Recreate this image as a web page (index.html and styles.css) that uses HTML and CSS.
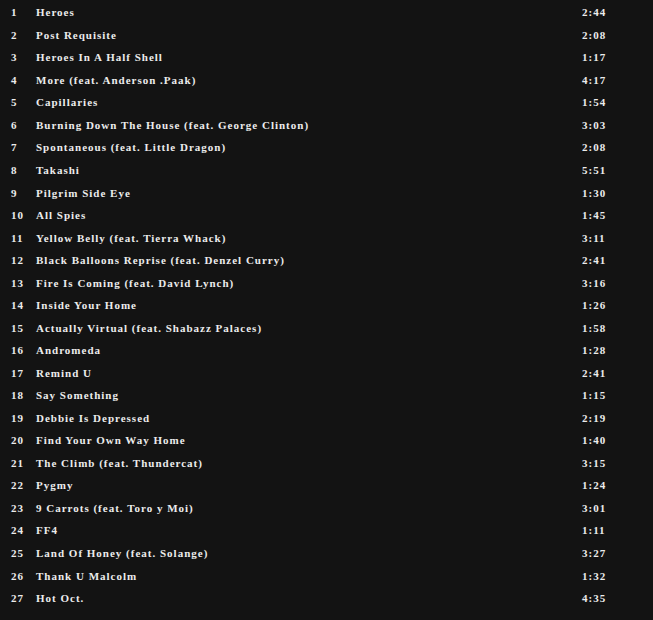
FILE: index.html
```html
<!DOCTYPE html>
<html lang="en">
<head>
  <meta charset="UTF-8" />
  <meta name="viewport" content="width=device-width, initial-scale=1.0" />
  <title>Tracklist</title>
  <link rel="stylesheet" href="styles.css">
</head>
<body>
  <ol class="tracklist">
    <li class="track"><span class="track-no">1</span><span class="track-title">Heroes</span><span class="track-time">2:44</span></li>
    <li class="track"><span class="track-no">2</span><span class="track-title">Post Requisite</span><span class="track-time">2:08</span></li>
    <li class="track"><span class="track-no">3</span><span class="track-title">Heroes In A Half Shell</span><span class="track-time">1:17</span></li>
    <li class="track"><span class="track-no">4</span><span class="track-title">More (feat. Anderson .Paak)</span><span class="track-time">4:17</span></li>
    <li class="track"><span class="track-no">5</span><span class="track-title">Capillaries</span><span class="track-time">1:54</span></li>
    <li class="track"><span class="track-no">6</span><span class="track-title">Burning Down The House (feat. George Clinton)</span><span class="track-time">3:03</span></li>
    <li class="track"><span class="track-no">7</span><span class="track-title">Spontaneous (feat. Little Dragon)</span><span class="track-time">2:08</span></li>
    <li class="track"><span class="track-no">8</span><span class="track-title">Takashi</span><span class="track-time">5:51</span></li>
    <li class="track"><span class="track-no">9</span><span class="track-title">Pilgrim Side Eye</span><span class="track-time">1:30</span></li>
    <li class="track"><span class="track-no">10</span><span class="track-title">All Spies</span><span class="track-time">1:45</span></li>
    <li class="track"><span class="track-no">11</span><span class="track-title">Yellow Belly (feat. Tierra Whack)</span><span class="track-time">3:11</span></li>
    <li class="track"><span class="track-no">12</span><span class="track-title">Black Balloons Reprise (feat. Denzel Curry)</span><span class="track-time">2:41</span></li>
    <li class="track"><span class="track-no">13</span><span class="track-title">Fire Is Coming (feat. David Lynch)</span><span class="track-time">3:16</span></li>
    <li class="track"><span class="track-no">14</span><span class="track-title">Inside Your Home</span><span class="track-time">1:26</span></li>
    <li class="track"><span class="track-no">15</span><span class="track-title">Actually Virtual (feat. Shabazz Palaces)</span><span class="track-time">1:58</span></li>
    <li class="track"><span class="track-no">16</span><span class="track-title">Andromeda</span><span class="track-time">1:28</span></li>
    <li class="track"><span class="track-no">17</span><span class="track-title">Remind U</span><span class="track-time">2:41</span></li>
    <li class="track"><span class="track-no">18</span><span class="track-title">Say Something</span><span class="track-time">1:15</span></li>
    <li class="track"><span class="track-no">19</span><span class="track-title">Debbie Is Depressed</span><span class="track-time">2:19</span></li>
    <li class="track"><span class="track-no">20</span><span class="track-title">Find Your Own Way Home</span><span class="track-time">1:40</span></li>
    <li class="track"><span class="track-no">21</span><span class="track-title">The Climb (feat. Thundercat)</span><span class="track-time">3:15</span></li>
    <li class="track"><span class="track-no">22</span><span class="track-title">Pygmy</span><span class="track-time">1:24</span></li>
    <li class="track"><span class="track-no">23</span><span class="track-title">9 Carrots (feat. Toro y Moi)</span><span class="track-time">3:01</span></li>
    <li class="track"><span class="track-no">24</span><span class="track-title">FF4</span><span class="track-time">1:11</span></li>
    <li class="track"><span class="track-no">25</span><span class="track-title">Land Of Honey (feat. Solange)</span><span class="track-time">3:27</span></li>
    <li class="track"><span class="track-no">26</span><span class="track-title">Thank U Malcolm</span><span class="track-time">1:32</span></li>
    <li class="track"><span class="track-no">27</span><span class="track-title">Hot Oct.</span><span class="track-time">4:35</span></li>
  </ol>
</body>
</html>
```

FILE: styles.css
```css
* {
  margin: 0;
  padding: 0;
  box-sizing: border-box;
}

body {
  background: #131313;
  color: #ececec;
  font-family: 'Liberation Serif', 'Times New Roman', serif;
  font-size: 11px;
  font-weight: 700;
  letter-spacing: 1px;
  min-height: 100vh;
}

.tracklist {
  list-style: none;
  padding: 1px 0 0 11px;
}

.track {
  display: flex;
  align-items: center;
  height: 22.54px;
}

.track-no {
  width: 25px;
  flex-shrink: 0;
}

.track-title {
  width: 546px;
  flex-shrink: 0;
}

.track-time {
  flex-shrink: 0;
}
```
